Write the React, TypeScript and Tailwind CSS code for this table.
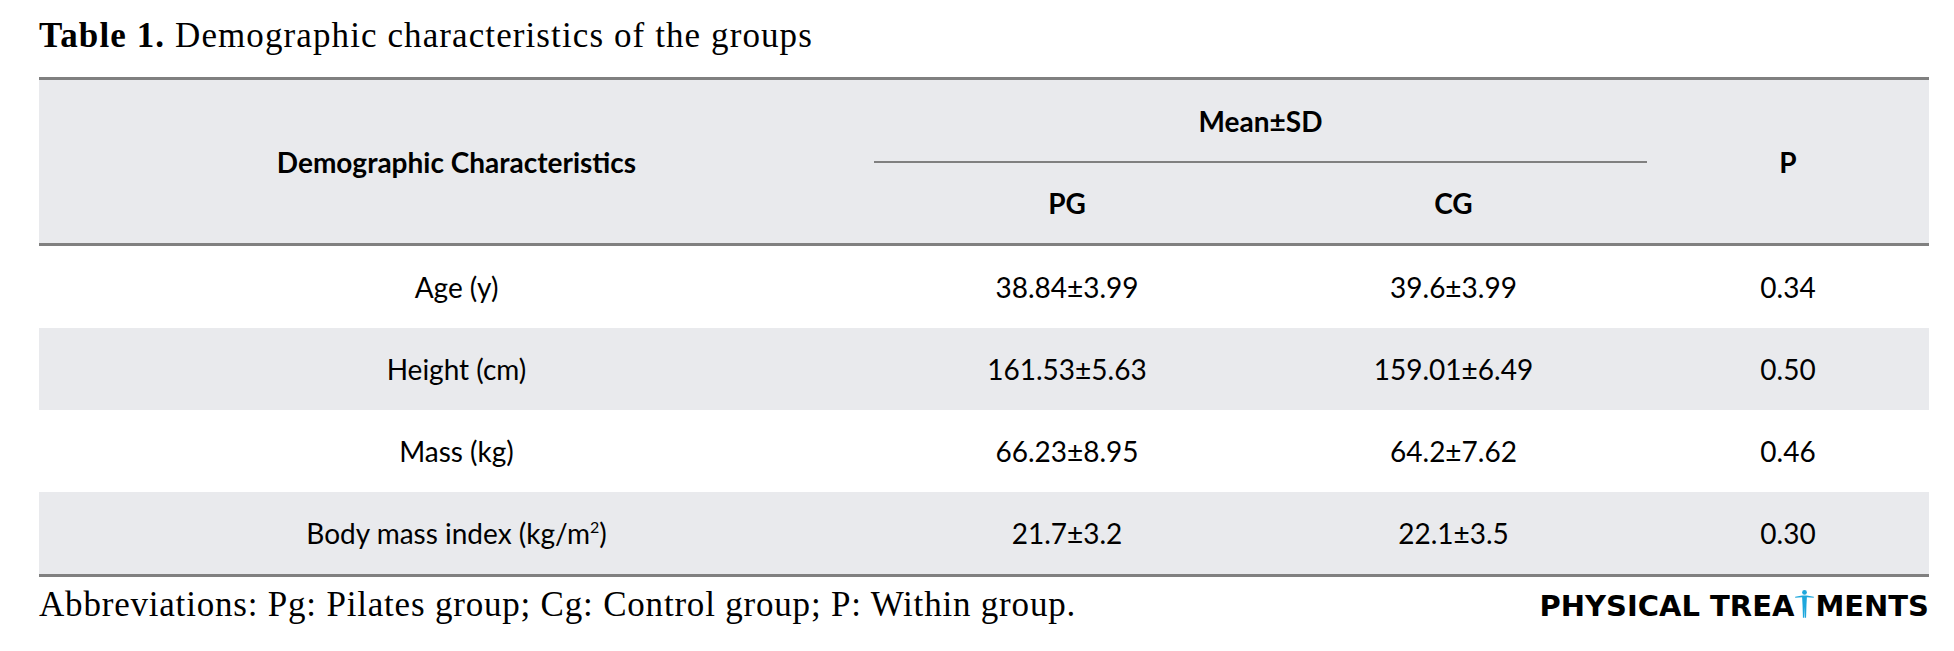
import React from "react";

const rows = [
  { label: <>Age (y)</>, pg: "38.84±3.99", cg: "39.6±3.99", p: "0.34", gray: false },
  { label: <>Height (cm)</>, pg: "161.53±5.63", cg: "159.01±6.49", p: "0.50", gray: true },
  { label: <>Mass (kg)</>, pg: "66.23±8.95", cg: "64.2±7.62", p: "0.46", gray: false },
  {
    label: (
      <>
        Body mass index (kg/m<sup className="text-[16px] relative -top-[11px]">2</sup>)
      </>
    ),
    pg: "21.7±3.2",
    cg: "22.1±3.5",
    p: "0.30",
    gray: true,
  },
];

function Figure() {
  return (
    <svg
      width="19"
      height="28"
      viewBox="0 0 18 27"
      className="inline-block align-[-2px] mx-[1px]"
      aria-hidden="true"
    >
      <g fill="#1ea7dc">
        <circle cx="9" cy="2.4" r="2.3" />
        <path d="M0 6.4 L6.8 5.2 L11.2 5.2 L18 6.4 L18 7.4 L11.3 7.1 L10.9 14.5 L10.5 26.8 L9.3 26.8 L9 16.2 L8.7 26.8 L7.5 26.8 L7.1 14.5 L6.7 7.1 L0 7.4 Z" />
      </g>
    </svg>
  );
}

export default function App() {
  return (
    <div className="w-[1954px] h-[651px] bg-white pl-[39px] pr-[25px] pt-[19px] text-black overflow-hidden">
      <div className="h-[34px] leading-[34px] text-[35px] tracking-[1.1px] font-['Liberation_Serif',serif] whitespace-nowrap">
        <span className="font-bold">Table 1.</span> Demographic characteristics of the groups
      </div>

      <div className="mt-[24px] border-t-[3px] border-b-[3px] border-[#808080] font-['Lato',sans-serif] text-[28px]">
        <div className="grid grid-cols-[835px_386px_387px_282px] grid-rows-[81px_2px_80px] bg-[#e9eaed] font-bold border-b-[3px] border-[#808080]">
          <div className="row-span-3 flex items-center justify-center">Demographic Characteristics</div>
          <div className="col-start-2 col-span-2 row-start-1 flex items-center justify-center">Mean±SD</div>
          <div className="col-start-4 row-start-1 row-span-3 flex items-center justify-center">P</div>
          <div className="col-start-2 col-span-2 row-start-2 bg-[#808080]" />
          <div className="col-start-2 row-start-3 flex items-center justify-center">PG</div>
          <div className="col-start-3 row-start-3 flex items-center justify-center">CG</div>
        </div>
        {rows.map((r, i) => (
          <div
            key={i}
            className={
              "grid grid-cols-[835px_386px_387px_282px] h-[82px] items-center text-center " +
              (r.gray ? "bg-[#e9eaed]" : "bg-white")
            }
          >
            <div>{r.label}</div>
            <div>{r.pg}</div>
            <div>{r.cg}</div>
            <div>{r.p}</div>
          </div>
        ))}
      </div>

      <div className="mt-[11px] flex items-baseline justify-between">
        <div className="leading-[34px] text-[35px] tracking-[0.8px] font-['Liberation_Serif',serif] whitespace-nowrap">
          Abbreviations: Pg: Pilates group; Cg: Control group; P: Within group.
        </div>
        <div className="font-['DejaVu_Sans',sans-serif] font-bold text-[29px] leading-[29px] tracking-[0px] whitespace-nowrap">
          PHYSICAL TREA<Figure />MENTS
        </div>
      </div>
    </div>
  );
}
